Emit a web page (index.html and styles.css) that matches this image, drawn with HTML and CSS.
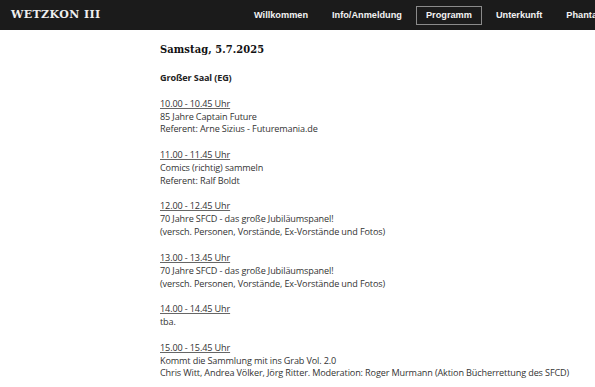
FILE: index.html
```html
<!DOCTYPE html>
<html lang="de">
<head>
    <meta charset="UTF-8">
    <meta name="viewport" content="width=device-width, initial-scale=1.0">
    <title>Programm | Wetzkon III</title>
    <link rel="stylesheet" href="styles.css">
</head>
<body>
    <!-- Navigation -->
    <header class="site-header">
        <div class="logo">WETZKON III</div>
        <nav>
            <ul>
                <li><a href="#">Willkommen</a></li>
                <li><a href="#">Info/Anmeldung</a></li>
                <li><a href="#" class="active">Programm</a></li>
                <li><a href="#">Unterkunft</a></li>
                <li><a href="#">Phantastik</a></li>
            </ul>
        </nav>
    </header>

    <!-- Programm -->
    <main>
        <h1>Samstag, 5.7.2025</h1>

        <p class="room">Großer Saal (EG)</p>

        <p>
            <span class="time">10.00 - 10.45 Uhr</span><br>
            85 Jahre Captain Future<br>
            Referent: Arne Sizius - Futuremania.de
        </p>

        <p>
            <span class="time">11.00 - 11.45 Uhr</span><br>
            Comics (richtig) sammeln<br>
            Referent: Ralf Boldt
        </p>

        <p>
            <span class="time">12.00 - 12.45 Uhr</span><br>
            70 Jahre SFCD - das große Jubiläumspanel!<br>
            (versch. Personen, Vorstände, Ex-Vorstände und Fotos)
        </p>

        <p>
            <span class="time">13.00 - 13.45 Uhr</span><br>
            70 Jahre SFCD - das große Jubiläumspanel!<br>
            (versch. Personen, Vorstände, Ex-Vorstände und Fotos)
        </p>

        <p>
            <span class="time">14.00 - 14.45 Uhr</span><br>
            tba.
        </p>

        <p>
            <span class="time">15.00 - 15.45 Uhr</span><br>
            Kommt die Sammlung mit ins Grab Vol. 2.0<br>
            Chris Witt, Andrea Völker, Jörg Ritter. Moderation: Roger Murmann (Aktion Bücherrettung des SFCD)
        </p>
    </main>
</body>
</html>
```

FILE: styles.css
```css
/* Base */
* {
    margin: 0;
    padding: 0;
    box-sizing: border-box;
}

html, body {
    overflow: hidden;
}

body {
    background: #fff;
    color: #333;
    font-family: 'Open Sans', sans-serif;
    font-size: 9.1px;
    letter-spacing: -0.13px;
    line-height: 12.85px;
}

/* Header */
.site-header {
    display: flex;
    align-items: center;
    height: 30px;
    padding-left: 11px;
    background: #1b1b1b;
    white-space: nowrap;
}

.logo {
    flex: 0 0 233px;
    color: #eee;
    font-family: 'DejaVu Serif', serif;
    font-weight: bold;
    font-size: 11px;
    letter-spacing: 0.4px;
}

nav ul {
    display: flex;
    gap: 4px;
    list-style: none;
}

nav ul li a {
    display: block;
    padding: 0 9px;
    line-height: 17px;
    border: 1px solid transparent;
    color: #f2f2f2;
    font-family: 'Liberation Sans', Arial, sans-serif;
    font-weight: bold;
    font-size: 9.2px;
    letter-spacing: 0;
    text-decoration: none;
}

nav ul li a.active {
    border-color: #8a8a8a;
}

/* Content */
main {
    padding: 13px 0 0 160px;
}

h1 {
    color: #111;
    font-family: 'DejaVu Serif Condensed', 'DejaVu Serif', serif;
    font-weight: bold;
    font-size: 11px;
    letter-spacing: 0.1px;
    line-height: 14px;
    margin-bottom: 15px;
}

p {
    margin-bottom: 12.85px;
}

.room {
    color: #222;
    font-weight: bold;
}

.time {
    text-decoration: underline;
    text-decoration-color: #666;
}
```
